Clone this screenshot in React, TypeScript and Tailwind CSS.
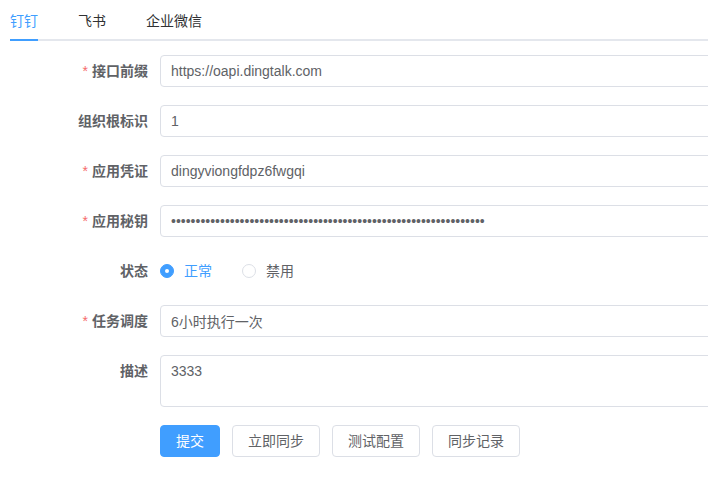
import React, { useState } from 'react';

const tabs = ['钉钉', '飞书', '企业微信'];

function Label({ text, required }: { text: string; required?: boolean }) {
  return (
    <div className="w-[150px] shrink-0 pr-3 text-right text-sm font-bold leading-8 text-[#606266]">
      {required && <span className="mr-1 font-normal text-[#f56c6c]">*</span>}
      {text}
    </div>
  );
}

function TextInput({ value, type = 'text' }: { value: string; type?: string }) {
  return (
    <input
      type={type}
      defaultValue={value}
      className="h-8 w-[600px] shrink-0 rounded border border-[#dcdfe6] bg-white px-[10px] text-sm text-[#606266] outline-none"
    />
  );
}

export default function App() {
  const [active, setActive] = useState(0);
  const [status, setStatus] = useState('normal');

  return (
    <div
      className="h-[485px] w-full overflow-hidden bg-white pl-[10px]"
      style={{ fontFamily: '"Liberation Sans", "Noto Sans CJK SC", sans-serif' }}
    >
      {/* Tabs */}
      <div className="flex h-[41px] items-stretch border-b-2 border-[#e4e7ed]">
        {tabs.map((t, i) => (
          <button
            key={t}
            onClick={() => setActive(i)}
            className={`relative -mb-[2px] flex items-center text-sm ${i === 0 ? 'pr-5' : 'px-5'} ${
              i === active ? 'text-[#409eff]' : 'text-[#303133]'
            }`}
          >
            <span className="relative flex h-full items-center">
              {t}
              {i === active && <span className="absolute bottom-0 left-0 h-[2px] w-full bg-[#409eff]" />}
            </span>
          </button>
        ))}
      </div>

      {/* Form */}
      <div className="mt-[14px] flex flex-col gap-[18px]">
        <div className="flex">
          <Label text="接口前缀" required />
          <TextInput value="https://oapi.dingtalk.com" />
        </div>
        <div className="flex">
          <Label text="组织根标识" />
          <TextInput value="1" />
        </div>
        <div className="flex">
          <Label text="应用凭证" required />
          <TextInput value="dingyviongfdpz6fwgqi" />
        </div>
        <div className="flex">
          <Label text="应用秘钥" required />
          <TextInput type="password" value={'x'.repeat(64)} />
        </div>
        <div className="flex">
          <Label text="状态" />
          <div className="flex h-8 items-center text-sm">
            <label className="mr-[30px] flex cursor-pointer items-center" onClick={() => setStatus('normal')}>
              <span
                className={`flex h-[14px] w-[14px] items-center justify-center rounded-full border ${
                  status === 'normal' ? 'border-[#409eff] bg-[#409eff]' : 'border-[#dcdfe6] bg-white'
                }`}
              >
                {status === 'normal' && <span className="h-1 w-1 rounded-full bg-white" />}
              </span>
              <span className={`pl-[10px] ${status === 'normal' ? 'text-[#409eff]' : 'text-[#606266]'}`}>正常</span>
            </label>
            <label className="flex cursor-pointer items-center" onClick={() => setStatus('disabled')}>
              <span
                className={`flex h-[14px] w-[14px] items-center justify-center rounded-full border ${
                  status === 'disabled' ? 'border-[#409eff] bg-[#409eff]' : 'border-[#dcdfe6] bg-white'
                }`}
              >
                {status === 'disabled' && <span className="h-1 w-1 rounded-full bg-white" />}
              </span>
              <span className={`pl-[10px] ${status === 'disabled' ? 'text-[#409eff]' : 'text-[#606266]'}`}>禁用</span>
            </label>
          </div>
        </div>
        <div className="flex">
          <Label text="任务调度" required />
          <TextInput value="6小时执行一次" />
        </div>
        <div className="flex">
          <Label text="描述" />
          <textarea
            rows={2}
            defaultValue="3333"
            className="h-[52px] w-[600px] shrink-0 resize-none rounded border border-[#dcdfe6] px-[10px] py-[5px] text-sm leading-[21px] text-[#606266] outline-none"
          />
        </div>
        <div className="flex">
          <div className="w-[150px] shrink-0" />
          <div className="flex gap-3">
            <button className="h-8 rounded border border-[#409eff] bg-[#409eff] px-[15px] text-sm text-white">提交</button>
            <button className="h-8 rounded border border-[#dcdfe6] bg-white px-[15px] text-sm text-[#606266]">立即同步</button>
            <button className="h-8 rounded border border-[#dcdfe6] bg-white px-[15px] text-sm text-[#606266]">测试配置</button>
            <button className="h-8 rounded border border-[#dcdfe6] bg-white px-[15px] text-sm text-[#606266]">同步记录</button>
          </div>
        </div>
      </div>
    </div>
  );
}
